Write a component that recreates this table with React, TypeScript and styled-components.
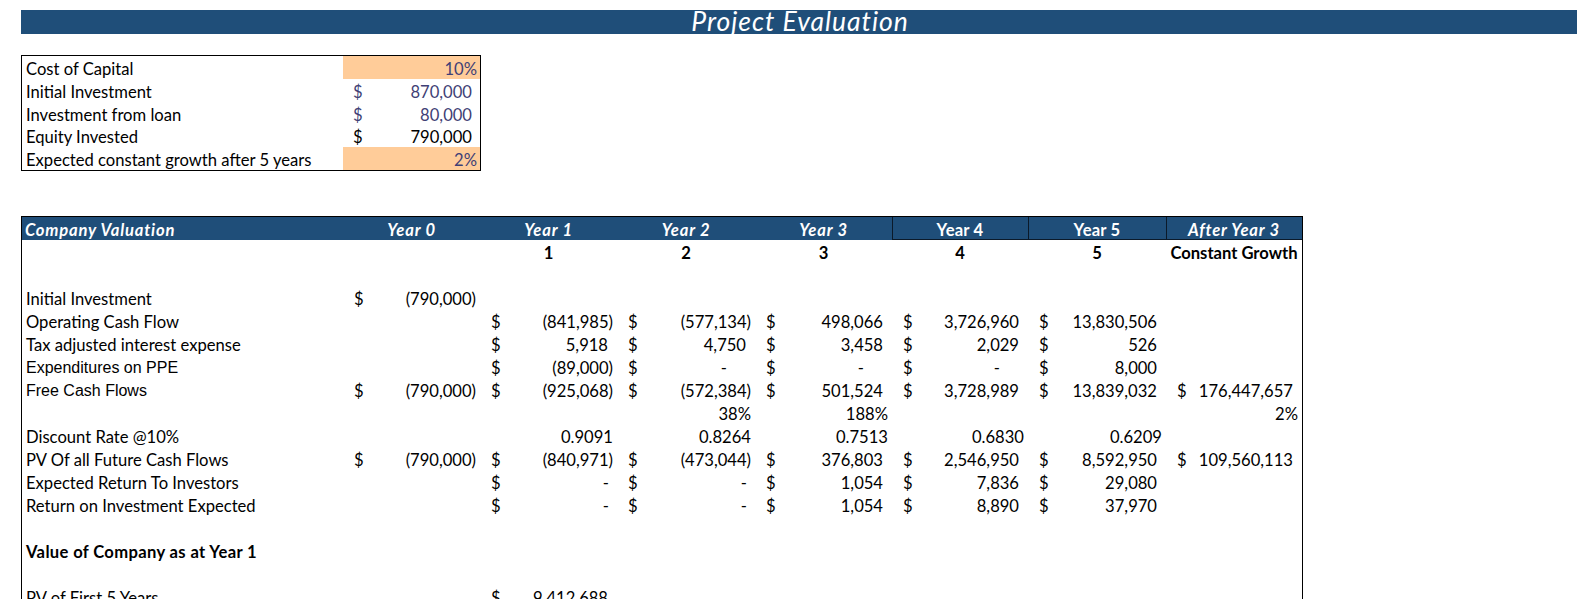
import React from "react";
import styled, { createGlobalStyle, css } from "styled-components";

const Global = createGlobalStyle`
  html, body { margin: 0; padding: 0; background: #fff; overflow: hidden; }
  body { font-family: Lato, "Open Sans", sans-serif; color: #000; }
`;

const BLUE = "#1F4E79";
const INPUT_TEXT = "#3F3F76";
const INPUT_FILL = "#FFCC99";
const FS = "16.6px";
const COLS = "321px 137px 137px 138px 137px 136px 138px 136px";

const cellText = css`
  font-size: ${FS};
  padding-top: 3px;
  line-height: 20px;
  white-space: nowrap;
  box-sizing: border-box;
`;

const Page = styled.div`
  padding: 10px 0 0 21px;
  width: 1556px;
`;

const TitleBar = styled.div`
  height: 24px;
  background: ${BLUE};
  display: flex;
  justify-content: center;
  align-items: flex-end;
  overflow: hidden;
`;

const Title = styled.span`
  color: #fff;
  font-style: italic;
  font-size: 26.5px;
  line-height: 26.5px;
  letter-spacing: 1px;
  margin-left: 2px;
`;

const InputBox = styled.div`
  margin-top: 21px;
  width: 458px;
  border: 1px solid #000;
  display: grid;
  grid-template-columns: 321px 137px;
  grid-auto-rows: 22.8px;
`;

const Label = styled.div<{ $bold?: boolean }>`
  ${cellText};
  padding-left: 4px;
  font-weight: ${(p) => (p.$bold ? 700 : 400)};
  letter-spacing: ${(p) => (p.$bold ? "0.35px" : "0")};
`;

const ArialLabel = styled(Label)`
  font-family: "Liberation Sans", Arial, sans-serif;
  font-size: 16px;
`;

const InputValue = styled.div<{ $fill?: boolean; $dark?: boolean }>`
  ${cellText};
  display: flex;
  justify-content: space-between;
  padding-left: 10px;
  padding-right: 3px;
  color: ${(p) => (p.$dark ? "#000" : INPUT_TEXT)};
  background: ${(p) => (p.$fill ? INPUT_FILL : "transparent")};
`;

const InputNum = styled.span<{ $pct?: boolean }>`
  padding-right: ${(p) => (p.$pct ? 0 : 5)}px;
`;

const Table = styled.div`
  margin-top: 45px;
  width: 1280px;
  border: 1px solid #000;
  border-bottom: none;
`;

const Row = styled.div`
  display: grid;
  grid-template-columns: ${COLS};
  height: 23px;
`;

const HeadRow = styled(Row)`
  background: ${BLUE};
`;

const HeadCell = styled.div<{ $italic?: boolean; $boxed?: boolean; $left?: boolean }>`
  ${cellText};
  color: #fff;
  font-weight: 700;
  font-style: ${(p) => (p.$italic ? "italic" : "normal")};
  letter-spacing: ${(p) => (p.$italic ? "0.8px" : "0.2px")};
  text-align: ${(p) => (p.$left ? "left" : "center")};
  padding-left: ${(p) => (p.$left ? "3px" : "0")};
  ${(p) =>
    p.$boxed &&
    css`
      box-shadow: inset 1px 0 0 #0b1a2a, inset 0 -1px 0 #0b1a2a;
    `}
`;

const Empty = styled.div``;

const Center = styled.div`
  ${cellText};
  text-align: center;
  font-weight: 700;
`;

const Plain = styled.div`
  ${cellText};
  text-align: right;
  padding-right: 4px;
`;

const Acct = styled.div`
  ${cellText};
  display: flex;
  justify-content: space-between;
  padding-left: 11px;
  padding-right: 4px;
`;

const Amount = styled.span<{ $pad: number }>`
  padding-right: ${(p) => p.$pad}px;
`;

type CellDef =
  | null
  | { t: "acct"; v: string }
  | { t: "dash"; long?: boolean }
  | { t: "plain"; v: string }
  | { t: "center"; v: string };

const a = (v: string): CellDef => ({ t: "acct", v });
const p = (v: string): CellDef => ({ t: "plain", v });
const c = (v: string): CellDef => ({ t: "center", v });
const dl: CellDef = { t: "dash", long: true };
const ds: CellDef = { t: "dash" };

const Cell: React.FC<{ c: CellDef }> = ({ c }) => {
  if (!c) return <Empty />;
  if (c.t === "plain") return <Plain>{c.v}</Plain>;
  if (c.t === "center") return <Center>{c.v}</Center>;
  if (c.t === "dash")
    return (
      <Acct>
        <span>$</span>
        <Amount $pad={c.long ? 24 : 4}>-</Amount>
      </Acct>
    );
  const neg = c.v.startsWith("(");
  return (
    <Acct>
      <span>$</span>
      <Amount $pad={neg ? 0 : 5}>{c.v}</Amount>
    </Acct>
  );
};

type RowDef = { label?: string; arial?: boolean; bold?: boolean; cells: CellDef[] };

const _ = null;
const rows: RowDef[] = [
  { cells: [_, c("1"), c("2"), c("3"), c("4"), c("5"), c("Constant Growth")] },
  { cells: [] },
  { label: "Initial Investment", cells: [a("(790,000)")] },
  { label: "Operating Cash Flow", cells: [_, a("(841,985)"), a("(577,134)"), a("498,066"), a("3,726,960"), a("13,830,506")] },
  { label: "Tax adjusted interest expense", cells: [_, a("5,918"), a("4,750"), a("3,458"), a("2,029"), a("526")] },
  { label: "Expenditures on PPE", arial: true, cells: [_, a("(89,000)"), dl, dl, dl, a("8,000")] },
  { label: "Free Cash Flows", arial: true, cells: [a("(790,000)"), a("(925,068)"), a("(572,384)"), a("501,524"), a("3,728,989"), a("13,839,032"), a("176,447,657")] },
  { cells: [_, _, p("38%"), p("188%"), _, _, p("2%")] },
  { label: "Discount Rate @10%", cells: [_, p("0.9091"), p("0.8264"), p("0.7513"), p("0.6830"), p("0.6209")] },
  { label: "PV Of all Future Cash Flows", cells: [a("(790,000)"), a("(840,971)"), a("(473,044)"), a("376,803"), a("2,546,950"), a("8,592,950"), a("109,560,113")] },
  { label: "Expected Return To Investors", cells: [_, ds, ds, a("1,054"), a("7,836"), a("29,080")] },
  { label: "Return on Investment Expected", cells: [_, ds, ds, a("1,054"), a("8,890"), a("37,970")] },
  { cells: [] },
  { label: "Value of Company as at Year 1", bold: true, cells: [] },
  { cells: [] },
  { label: "PV of First 5 Years", cells: [_, a("9,412,688")] },
  { cells: [] },
];

const headers: { text: string; italic?: boolean; boxed?: boolean; left?: boolean }[] = [
  { text: "Company Valuation", italic: true, left: true },
  { text: "Year 0", italic: true },
  { text: "Year 1", italic: true },
  { text: "Year 2", italic: true },
  { text: "Year 3", italic: true },
  { text: "Year 4", boxed: true },
  { text: "Year 5", boxed: true },
  { text: "After Year 3", italic: true, boxed: true },
];

const inputs = [
  { label: "Cost of Capital", dollar: false, value: "10%", fill: true },
  { label: "Initial Investment", dollar: true, value: "870,000" },
  { label: "Investment from loan", dollar: true, value: "80,000" },
  { label: "Equity Invested", dollar: true, value: "790,000", dark: true },
  { label: "Expected constant growth after 5 years", dollar: false, value: "2%", fill: true },
];

export default function App() {
  return (
    <>
      <Global />
      <Page>
        <TitleBar>
          <Title>Project Evaluation</Title>
        </TitleBar>

        <InputBox>
          {inputs.map((r) => (
            <React.Fragment key={r.label}>
              <Label>{r.label}</Label>
              <InputValue $fill={r.fill} $dark={r.dark}>
                <span>{r.dollar ? "$" : ""}</span>
                <InputNum $pct={!r.dollar}>{r.value}</InputNum>
              </InputValue>
            </React.Fragment>
          ))}
        </InputBox>

        <Table>
          <HeadRow>
            {headers.map((h) => (
              <HeadCell key={h.text} $italic={h.italic} $boxed={h.boxed} $left={h.left}>
                {h.text}
              </HeadCell>
            ))}
          </HeadRow>
          {rows.map((r, i) => (
            <Row key={i}>
              {r.arial ? (
                <ArialLabel>{r.label}</ArialLabel>
              ) : (
                <Label $bold={r.bold}>{r.label ?? ""}</Label>
              )}
              {Array.from({ length: 7 }).map((_, j) => (
                <Cell key={j} c={r.cells[j] ?? null} />
              ))}
            </Row>
          ))}
        </Table>
      </Page>
    </>
  );
}
